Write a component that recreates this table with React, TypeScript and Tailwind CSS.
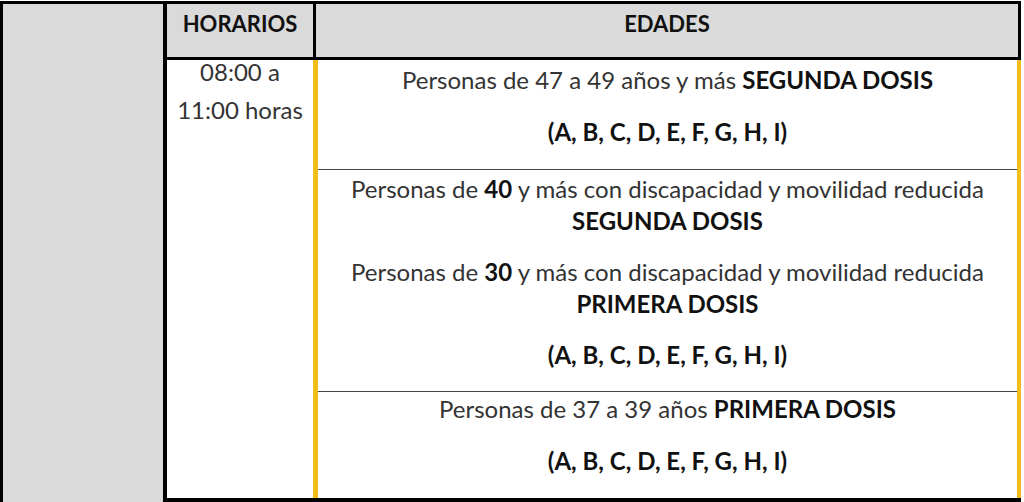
import React from "react";

const font = { fontFamily: "Lato, 'Open Sans', sans-serif" };

function P({ children }: { children: React.ReactNode }) {
  return <p className="leading-[32px] text-[#333]">{children}</p>;
}

const B = ({ children }: { children: React.ReactNode }) => (
  <b className="font-bold text-[#111]">{children}</b>
);

export default function App() {
  return (
    <div
      className="w-[1024px] h-[502px] bg-white flex pt-[1px] overflow-hidden text-[24px]"
      style={font}
    >
      <div className="w-[163px] shrink-0 bg-[#dadada] border-l-[3px] border-t-[3px] border-black" />
      <div className="w-[858px] shrink-0 flex flex-col border-b-[4px] border-black border-t-[3px] border-l-[4px]">
        <div className="flex h-[56px] bg-[#dadada] border-b-[3px] border-black border-r-[3px] text-[22px]">
          <div className="w-[146px] shrink-0 flex justify-center pt-[3px] font-bold text-[#111]">HORARIOS</div>
          <div className="w-[3px] bg-black" />
          <div className="flex-1 flex justify-center pt-[3px] font-bold text-[#111]">EDADES</div>
        </div>
        <div className="flex flex-1">
          <div className="w-[146px] shrink-0 text-center text-[#333] -mt-[7px] leading-[38px]">
            08:00 a
            <br />
            11:00 horas
          </div>
          <div className="w-[5px] bg-[#f3bd1a]" />
          <div className="flex-1 flex flex-col text-center">
            <div className="h-[110px] pt-[4px] flex flex-col gap-[20px] border-b border-[#444]">
              <P>
                Personas de 47 a 49 años y más <B>SEGUNDA DOSIS</B>
              </P>
              <P>
                <B>(A, B, C, D, E, F, G, H, I)</B>
              </P>
            </div>
            <div className="h-[222px] pt-[3px] flex flex-col gap-[19px] border-b border-[#444]">
              <P>
                Personas de <B>40</B> y más con discapacidad y movilidad reducida
                <br />
                <B>SEGUNDA DOSIS</B>
              </P>
              <P>
                Personas de <B>30</B> y más con discapacidad y movilidad reducida
                <br />
                <B>PRIMERA DOSIS</B>
              </P>
              <P>
                <B>(A, B, C, D, E, F, G, H, I)</B>
              </P>
            </div>
            <div className="flex-1 pt-[1px] flex flex-col gap-[20px]">
              <P>
                Personas de 37 a 39 años <B>PRIMERA DOSIS</B>
              </P>
              <P>
                <B>(A, B, C, D, E, F, G, H, I)</B>
              </P>
            </div>
          </div>
          <div className="w-[4px] bg-[#f3bd1a]" />
        </div>
      </div>
    </div>
  );
}
